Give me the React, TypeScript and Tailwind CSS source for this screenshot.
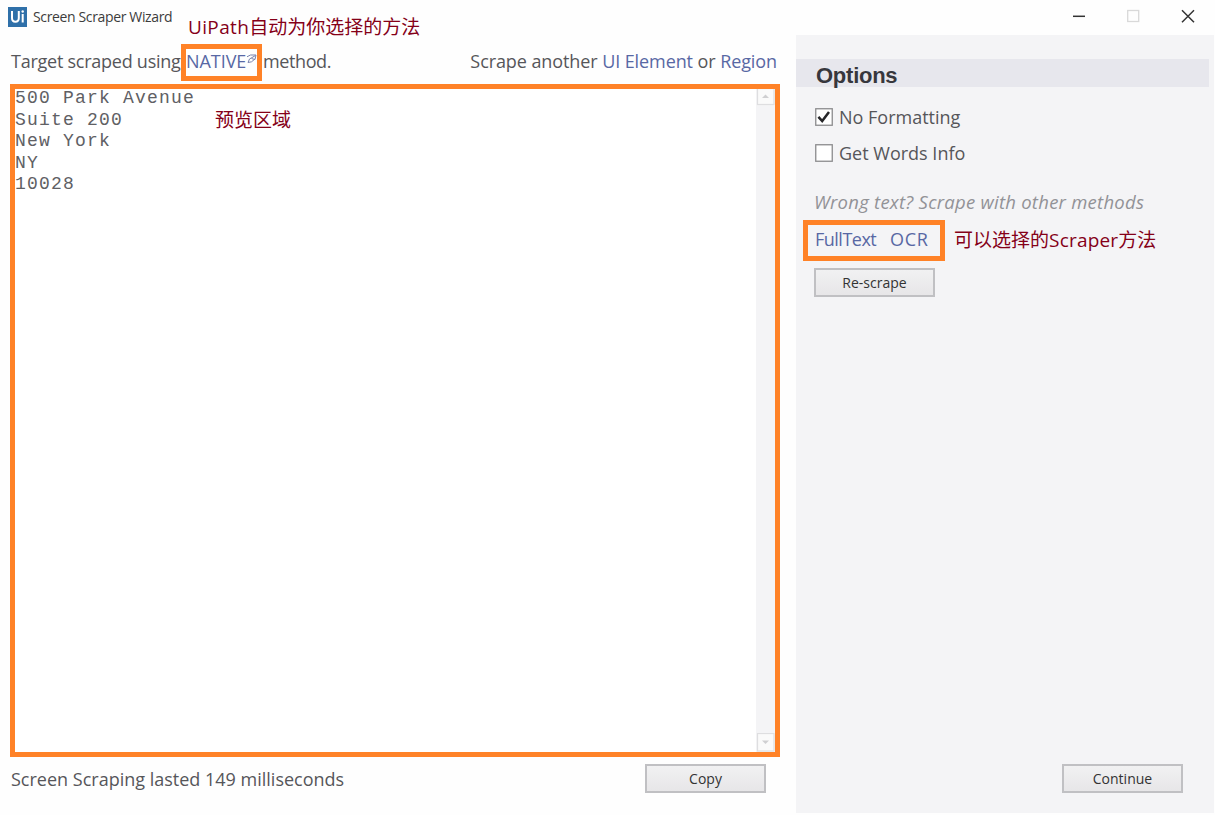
import type { ReactNode } from "react";

const lines = ["500 Park Avenue", "Suite 200", "New York", "NY", "10028"];

function Button({ children, className }: { children: ReactNode; className: string }) {
  return (
    <button
      className={`h-[29px] w-[121px] border-2 border-[#c0c0c3] bg-linear-to-b from-[#f1f1f2] to-[#e7e6e8] text-[14px] leading-[25px] font-medium text-[#333] ${className}`}
    >
      {children}
    </button>
  );
}

function Checkbox({ checked, label }: { checked: boolean; label: string }) {
  return (
    <label className="ml-px flex h-9 items-center gap-[6px]">
      <svg width="18" height="18" viewBox="0 0 18 18" className="shrink-0">
        <rect x="0.75" y="0.75" width="16.5" height="16.5" fill="#fff" stroke="#8b8b8d" strokeWidth="1.3" />
        {checked && <path d="M3.4 8.8 L7.2 13 L14 4" fill="none" stroke="#252528" strokeWidth="2.5" />}
      </svg>
      <span>{label}</span>
    </label>
  );
}

function ScrollButton({ down = false }: { down?: boolean }) {
  return (
    <svg width="19" height={down ? 19 : 17} viewBox={down ? "0 0 19 19" : "0 0 19 17"} className="shrink-0">
      <rect x="1.5" y={down ? 0.5 : -0.5} width="16.5" height={down ? 17.5 : 16} fill="#fafafa" stroke="#dedee0" strokeWidth="1.2" />
      <path d={down ? "M6 7.5 H13 L9.5 11 Z" : "M6 9 H13 L9.5 5.5 Z"} fill="#cfcfd1" />
    </svg>
  );
}

export default function App() {
  return (
    <div className="relative flex h-[815px] w-[1215px] flex-col overflow-hidden bg-[#fefefe] font-['Open_Sans','Noto_Sans_CJK_SC',sans-serif] text-[18px] whitespace-nowrap text-[#56565a]">
      <header className="flex h-[35px] shrink-0 items-start justify-between pl-2">
        <div className="flex items-center pt-[6px]">
          <svg width="19" height="20" viewBox="0 0 19 20">
            <rect width="19" height="20" fill="#2f70a9" />
            <path d="M4 4 V11 Q4 14.8 7.4 14.8 Q10.8 14.8 10.8 11 V4" fill="none" stroke="#fff" strokeWidth="2" />
            <path d="M14.7 7 V15.5" stroke="#fff" strokeWidth="2" />
            <circle cx="14.7" cy="4.5" r="1.2" fill="#fff" />
          </svg>
          <h1 className="ml-[6px] pt-px text-[14px] leading-5 font-medium tracking-[-0.36px] text-[#3c3c3c]">Screen Scraper Wizard</h1>
        </div>
        <div className="flex items-center gap-[41px] pt-[9px] pr-[20px]">
          <svg width="14" height="14" viewBox="0 0 14 14"><path d="M1 7.3 H13" stroke="#333" strokeWidth="1.5" /></svg>
          <svg width="13" height="14" viewBox="0 0 13 14"><rect x="0.7" y="1.5" width="11" height="11" fill="none" stroke="#d9d9d9" strokeWidth="1.3" /></svg>
          <svg width="14" height="14" viewBox="0 0 14 14"><path d="M1 1.2 L13 13.2 M13 1.2 L1 13.2" stroke="#333" strokeWidth="1.5" /></svg>
        </div>
      </header>

      <div className="flex h-[778px] shrink-0">
        <main className="flex w-[796px] shrink-0 flex-col">
          <div className="flex h-[49px] items-center justify-between pt-[3px] pr-[19px] pl-[11px]">
            <div className="flex">
              <span className="w-[175px] tracking-[-0.25px]">Target scraped using</span>
              <span className="flex w-[77px] text-[#5868a4]">
                <span className="tracking-[-0.05px]">NATIVE</span>
                <svg width="12" height="12" viewBox="0 0 12 12" className="mt-[5px]">
                  <path d="M1 3.8 L4.5 2 H10 L9 6.5 L5.5 5.5 M9.5 2.5 L3.5 6 L2 9.5 L5.5 8.8 L9 6" fill="none" stroke="#7982ad" strokeWidth="1" />
                </svg>
              </span>
              <span className="tracking-[-0.4px]">method.</span>
            </div>
            <div className="tracking-[-0.09px]">
              Scrape another <span className="text-[#5868a4]">UI Element</span> or <span className="text-[#5868a4]">Region</span>
            </div>
          </div>

          <section className="ml-[10px] flex h-[673px] w-[770px] shrink-0 justify-between border-[5px] border-[#ff8227] bg-white">
            <div className="-mt-px font-['Liberation_Mono',monospace] text-[18px] leading-[21.5px] tracking-[1.2px] text-[#606064]">
              {lines.map((line) => <div key={line}>{line}</div>)}
            </div>
            <div className="flex w-[19px] flex-col justify-between bg-[#f4f4f6]">
              <ScrollButton />
              <ScrollButton down />
            </div>
          </section>

          <div className="flex h-[43px] items-center justify-between pr-[30px] pl-[11px]">
            <span className="pt-[2px]">Screen Scraping lasted 149 milliseconds</span>
            <Button className="">Copy</Button>
          </div>
        </main>

        <aside className="flex w-[418px] shrink-0 flex-col bg-[#f4f4f6] pt-6">
          <h2 className="h-[28px] w-[413px] bg-[#e7e7ed] pl-[20px] font-['Liberation_Sans',sans-serif] text-[22px] leading-[34px] font-bold tracking-[-0.25px] text-[#37373d]">Options</h2>
          <div className="flex grow flex-col pt-3 pl-[18px]">
            <Checkbox checked label="No Formatting" />
            <Checkbox checked={false} label="Get Words Info" />
            <p className="mt-[17px] h-[28px] text-[18.5px] leading-[27px] tracking-[0.25px] text-[#929296] italic">Wrong text? Scrape with other methods</p>
            <div className="mt-[10px] ml-px flex h-[27px] leading-[27px] text-[#5868a4]">
              <span className="w-[75px] tracking-[-0.5px]">FullText</span>
              <span className="tracking-[0.7px]">OCR</span>
            </div>
            <Button className="mt-[15px]">Re-scrape</Button>
            <Button className="mt-auto mr-[31px] mb-[20px] self-end">Continue</Button>
          </div>
        </aside>
      </div>

      <div className="absolute top-[44px] left-[181px] h-[37px] w-[81px] border-[5px] border-[#ff8227]" />
      <div className="absolute top-[220px] left-[803px] h-[41px] w-[142px] border-[5px] border-[#ff8227]" />
      <p className="absolute top-[13px] left-[188px] text-[19px] leading-7 text-[#850018]"><span className="tracking-[0.35px]">UiPath</span>自动为你选择的方法</p>
      <p className="absolute top-[106px] left-[215px] text-[19px] leading-7 text-[#850018]">预览区域</p>
      <p className="absolute top-[226px] left-[954px] text-[19px] leading-7 text-[#850018]">可以选择的<span className="tracking-[0.2px]">Scraper</span>方法</p>
    </div>
  );
}
